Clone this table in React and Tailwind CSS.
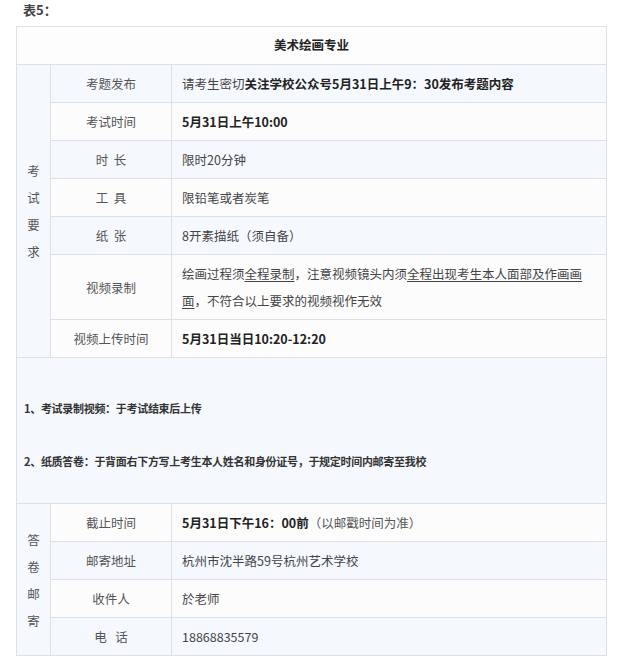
import React from "react";

const FONT = { fontFamily: '"Noto Sans CJK SC", "Noto Sans", sans-serif' };
const BLUE = "bg-[#f5f8fd]";
const WHITE = "bg-[#fcfcfd]";

function Label({ children, bg }) {
  return (
    <div className={`${bg} border-r border-b border-[#dde0e4] flex items-center justify-center text-[#555] py-[5px] leading-[27px]`}>
      {children}
    </div>
  );
}

function Val({ children, bg, bold }) {
  return (
    <div className={`${bg} border-r border-b border-[#dde0e4] flex flex-col justify-center pl-[10px] pr-2 py-[5px] leading-[27px] ${bold ? "font-bold text-[#222]" : "text-[#444]"}`}>
      {children}
    </div>
  );
}

function Side({ chars, span }) {
  return (
    <div className={`${BLUE} ${span} border-r border-b border-[#dde0e4] flex flex-col items-center justify-center text-[#555] leading-[27px]`}>
      {chars.map((c) => (
        <span key={c}>{c}</span>
      ))}
    </div>
  );
}

export default function App() {
  return (
    <div className="w-[618px] h-[669px] bg-white text-[12.5px]" style={FONT}>
      <div className="pl-[23px] pt-[1px] h-[26px] text-[13px] font-bold text-[#444] leading-[18px]">表5：</div>
      <div className="ml-[16px] w-[591px] border-l border-t border-[#dde0e4] grid grid-cols-[34px_121px_1fr]">
        <div className="col-span-3 bg-[#fdfdfd] border-r border-b border-[#dde0e4] h-[38px] flex items-center justify-center font-bold text-[#222]">
          美术绘画专业
        </div>

        <Side chars={["考", "试", "要", "求"]} span="row-span-7" />
        <Label bg={BLUE}>考题发布</Label>
        <Val bg={BLUE}>
          <span>
            请考生密切<b className="text-[#222]">关注学校公众号5月31日上午9：30发布考题内容</b>
          </span>
        </Val>
        <Label bg={WHITE}>考试时间</Label>
        <Val bg={WHITE} bold>5月31日上午10:00</Val>
        <Label bg={BLUE}>时&nbsp;&nbsp;长</Label>
        <Val bg={BLUE}>限时20分钟</Val>
        <Label bg={WHITE}>工&nbsp;&nbsp;具</Label>
        <Val bg={WHITE}>限铅笔或者炭笔</Val>
        <Label bg={BLUE}>纸&nbsp;&nbsp;张</Label>
        <Val bg={BLUE}>8开素描纸（须自备）</Val>
        <Label bg={WHITE}>视频录制</Label>
        <Val bg={WHITE}>
          <span className="whitespace-nowrap">
            绘画过程须<u className="underline-offset-2">全程录制</u>，注意视频镜头内须<u className="underline-offset-2">全程出现考生本人面部及作画画</u>
          </span>
          <span className="whitespace-nowrap">
            <u className="underline-offset-2">面</u>，不符合以上要求的视频视作无效
          </span>
        </Val>
        <Label bg={WHITE}>视频上传时间</Label>
        <Val bg={WHITE} bold>5月31日当日10:20-12:20</Val>

        <div className={`col-span-3 ${BLUE} border-r border-b border-[#dde0e4] h-[146px] pl-[7px] pt-[37px] font-bold text-[11px] tracking-[-0.3px] text-[#333] leading-[26px]`}>
          <div>1、考试录制视频：于考试结束后上传</div>
          <div className="mt-[27px]">2、纸质答卷：于背面右下方写上考生本人姓名和身份证号，于规定时间内邮寄至我校</div>
        </div>

        <Side chars={["答", "卷", "邮", "寄"]} span="row-span-4" />
        <Label bg={WHITE}>截止时间</Label>
        <Val bg={WHITE}>
          <span>
            <b className="text-[#222]">5月31日下午16：00前</b>
            <span className="text-[#555]">（以邮戳时间为准）</span>
          </span>
        </Val>
        <Label bg={BLUE}>邮寄地址</Label>
        <Val bg={BLUE}>杭州市沈半路59号杭州艺术学校</Val>
        <Label bg={WHITE}>收件人</Label>
        <Val bg={WHITE}>於老师</Val>
        <Label bg={BLUE}>电&nbsp;&nbsp;&nbsp;话</Label>
        <Val bg={BLUE}>18868835579</Val>
      </div>
    </div>
  );
}
